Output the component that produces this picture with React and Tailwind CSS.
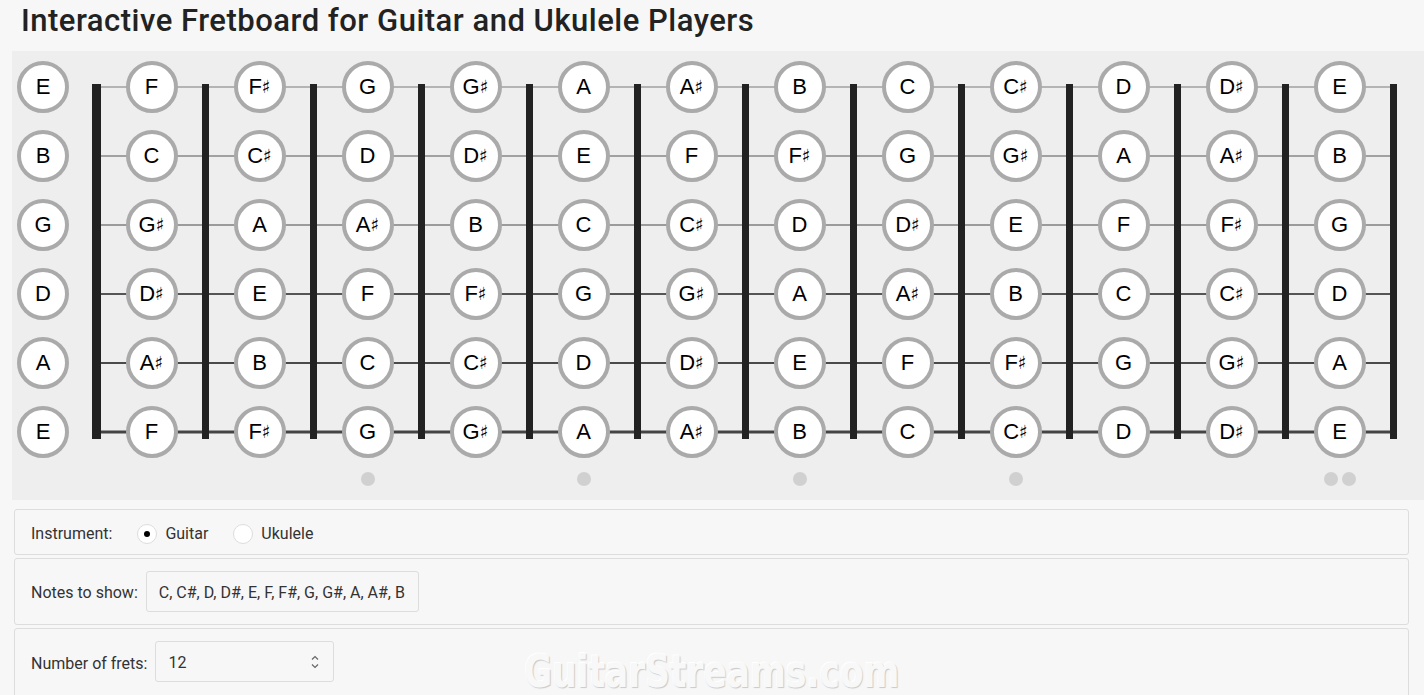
import React from 'react';

const CHROMATIC = ['C', 'C#', 'D', 'D#', 'E', 'F', 'F#', 'G', 'G#', 'A', 'A#', 'B'];
const OPEN = ['E', 'B', 'G', 'D', 'A', 'E'];
const FRETS = 12;

// string line per row: thin on top, heavier on the bass strings
const STRING_LINE = [
  'h-[1px] bg-[#7a7a7a]',
  'h-[1px] bg-[#555]',
  'h-[1px] bg-[#484848]',
  'h-[2px] bg-[#555]',
  'h-[2px] bg-[#4a4a4a]',
  'h-[3px] bg-[#444]',
];

const noteAt = (open, fret) => CHROMATIC[(CHROMATIC.indexOf(open) + fret) % 12];

const Note = ({ name }) => {
  const sharp = name.endsWith('#');
  return (
    <div className="relative z-10 flex h-[52px] w-[52px] items-center justify-center rounded-full border-4 border-[#aaa] bg-white text-[22px] leading-none text-black [font-family:'Liberation_Sans',Arial,sans-serif]">
      <span>{name[0]}</span>
      {sharp && <span className="text-[18px] [font-family:'DejaVu_Sans',sans-serif]">♯</span>}
    </div>
  );
};

const FretCell = ({ fret }) => (
  <div className="flex w-[101px] flex-col">
    {OPEN.map((open, i) => (
      <div key={i} className="relative flex h-[69px] items-center justify-center">
        <div className={`absolute left-0 right-0 top-1/2 -translate-y-1/2 ${STRING_LINE[i]}`} />
        <Note name={noteAt(open, fret)} />
      </div>
    ))}
  </div>
);

const FretBar = ({ nut }) => (
  <div className={`mt-[32px] h-[355px] shrink-0 bg-[#222] ${nut ? 'w-[9px]' : 'w-[7px]'}`} />
);

const Dot = () => <div className="h-[14px] w-[14px] rounded-full bg-[#d0d0d0]" />;

const Radio = ({ checked, label }) => (
  <label className="flex items-center gap-[8px]">
    <span className="flex h-[20px] w-[20px] items-center justify-center rounded-full border border-[#ddd] bg-white">
      {checked && <span className="h-[6px] w-[6px] rounded-full bg-black" />}
    </span>
    <span>{label}</span>
  </label>
);

const Box = ({ className, children }) => (
  <div className={`flex items-center rounded-[3px] border border-[#ddd] pl-[16px] ${className}`}>{children}</div>
);

export default function App() {
  const frets = Array.from({ length: FRETS }, (_, i) => i + 1);
  const dots = { 3: 1, 5: 1, 7: 1, 9: 1, 12: 2 };

  return (
    <div className="relative min-h-[695px] overflow-hidden bg-[#f7f7f7] text-[#333] [font-family:Roboto,'Noto_Sans',sans-serif]">
      <h1 className="h-[51px] pl-[21px] pt-[1px] text-[31px] font-medium leading-[40px] tracking-[0.5px] text-[#222]">
        Interactive Fretboard for Guitar and Ukulele Players
      </h1>

      {/* Fretboard */}
      <div className="ml-[12px] bg-[#eeeeee] pt-[1px]">
        <div className="flex">
          <div className="flex w-[80px] shrink-0 flex-col pl-[5px]">
            {OPEN.map((n, i) => (
              <div key={i} className="flex h-[69px] items-center">
                <Note name={n} />
              </div>
            ))}
          </div>
          <FretBar nut />
          {frets.map((f) => (
            <React.Fragment key={f}>
              <FretCell fret={f} />
              <FretBar />
            </React.Fragment>
          ))}
        </div>
        <div className="flex h-[34px]">
          <div className="w-[89px] shrink-0" />
          {frets.map((f) => (
            <React.Fragment key={f}>
              <div className="flex w-[101px] justify-center gap-[4px] pt-[6px]">
                {dots[f] >= 1 && <Dot />}
                {dots[f] === 2 && <Dot />}
              </div>
              <div className="w-[7px] shrink-0" />
            </React.Fragment>
          ))}
        </div>
      </div>

      {/* Controls */}
      <div className="ml-[14px] mr-[15px] mt-[9px] flex flex-col gap-[3px] text-[16px]">
        <Box className="h-[46px] gap-[25px] pt-[3px]">
          <span>Instrument:</span>
          <Radio checked label="Guitar" />
          <Radio label="Ukulele" />
        </Box>
        <Box className="h-[67px] gap-[8px]">
          <span className="pt-[2px]">Notes to show:</span>
          <div className="flex h-[41px] w-[273px] items-center rounded-[3px] border border-[#ddd] pl-[12px] pt-[2px]">
            C, C#, D, D#, E, F, F#, G, G#, A, A#, B
          </div>
        </Box>
        <Box className="h-[80px] items-start gap-[8px] pt-[12px]">
          <span className="pt-[2px] leading-[41px]">Number of frets:</span>
          <div className="flex h-[41px] w-[179px] items-center justify-between rounded-[3px] border border-[#ddd] pl-[12px] pr-[14px]">
            <span className="pt-[2px]">12</span>
            <svg width="8" height="14" viewBox="0 0 8 14" fill="none" stroke="#666" strokeWidth="1.2">
              <path d="M1 4.5 L4 1.5 L7 4.5" />
              <path d="M1 9.5 L4 12.5 L7 9.5" />
            </svg>
          </div>
        </Box>
      </div>

      {/* Watermark */}
      <div className="pointer-events-none absolute left-0 right-0 top-[647px] flex justify-center">
        <div className="scale-x-[0.85] text-[45px] font-bold leading-[50px] text-[#f8f8f8] [font-family:'DejaVu_Sans_Condensed','DejaVu_Sans',sans-serif] [text-shadow:1px_1px_1px_#c9c9c9,-1px_-1px_0_#ffffff]">
          GuitarStreams.com
        </div>
      </div>
    </div>
  );
}
